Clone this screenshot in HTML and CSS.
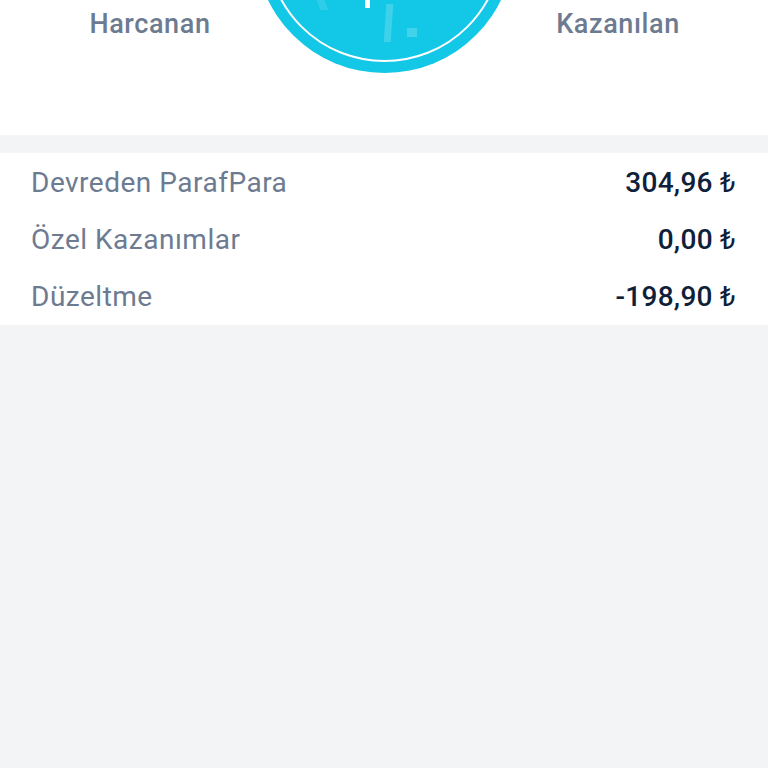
FILE: index.html
```html
<!DOCTYPE html>
<html lang="tr">
<head>
<meta charset="utf-8">
<link rel="stylesheet" href="styles.css">
</head>
<body>
<div class="page">
  <header class="summary">
    <div class="side">Harcanan</div>
    <div class="dial-col">
      <div class="dial">
        <div class="ring"></div>
        <span class="mark mark-a"></span>
        <span class="mark mark-b"></span>
        <span class="mark mark-c"></span>
        <span class="mark mark-d"></span>
      </div>
    </div>
    <div class="side">Kazanılan</div>
  </header>
  <div class="gap"></div>
  <section class="list">
    <div class="row"><span class="label">Devreden ParafPara</span><span class="value">304,96 <span class="cur">₺</span></span></div>
    <div class="row"><span class="label">Özel Kazanımlar</span><span class="value">0,00 <span class="cur">₺</span></span></div>
    <div class="row"><span class="label">Düzeltme</span><span class="value">-198,90 <span class="cur">₺</span></span></div>
  </section>
</div>
</body>
</html>
```
FILE: styles.css
```css
html, body {
  margin: 0;
  padding: 0;
  background: #f3f4f6;
  font-family: Roboto, "Noto Sans", sans-serif;
}
.page {
  width: 768px;
  height: 768px;
  overflow: hidden;
  background: #f3f4f6;
}
.summary {
  height: 135px;
  background: #ffffff;
  display: grid;
  grid-template-columns: 300px 168px 300px;
  align-items: start;
}
.side {
  text-align: center;
  font-size: 27px;
  font-weight: 500;
  letter-spacing: 0.6px;
  color: #6d7b91;
  line-height: 30px;
  padding-top: 9px;
}
.dial-col {
  display: flex;
  justify-content: center;
}
.dial {
  position: relative;
  flex: none;
  width: 259px;
  height: 259px;
  margin-top: -186px;
  border-radius: 50%;
  background: #13c7e6;
}
.ring {
  position: absolute;
  left: 11px;
  top: 11px;
  width: 237px;
  height: 237px;
  border: 2px solid #ffffff;
  border-radius: 50%;
  box-sizing: border-box;
}
.mark {
  position: absolute;
  display: block;
}
.mark-a {
  left: 110px;
  top: 180px;
  width: 5px;
  height: 14px;
  background: #ffffff;
}
.mark-b {
  left: 130px;
  top: 190px;
  width: 7px;
  height: 38px;
  background: rgba(255, 255, 255, 0.18);
  transform: skewX(-4deg);
}
.mark-c {
  left: 152px;
  top: 214px;
  width: 10px;
  height: 9px;
  background: rgba(255, 255, 255, 0.2);
}
.mark-d {
  left: 62px;
  top: 178px;
  width: 8px;
  height: 18px;
  background: rgba(255, 255, 255, 0.12);
  transform: skewX(20deg);
}
.gap {
  height: 18px;
}
.list {
  background: #ffffff;
  padding: 1px 32px 0 31px;
  height: 171px;
}
.row {
  height: 57px;
  display: flex;
  align-items: center;
  justify-content: space-between;
}
.label {
  font-size: 28px;
  letter-spacing: 0.5px;
  color: #6d7b91;
}
.value {
  font-size: 28px;
  font-weight: 500;
  letter-spacing: 0.3px;
  color: #0f2039;
}
.cur {
  font-weight: 400;
}
```
